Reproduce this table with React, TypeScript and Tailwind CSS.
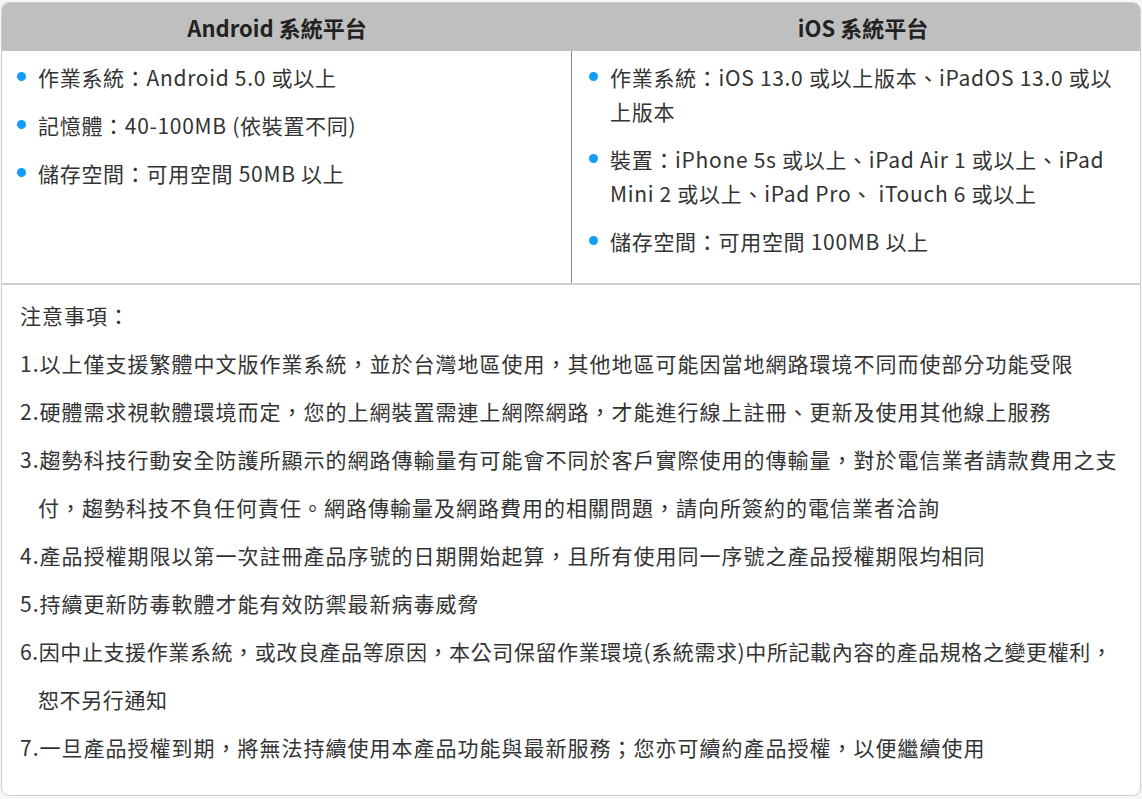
import React from 'react';

const android = ['作業系統：Android 5.0 或以上', '記憶體：40-100MB (依裝置不同)', '儲存空間：可用空間 50MB 以上'];

const ios = [
  '作業系統：iOS 13.0 或以上版本、iPadOS 13.0 或以上版本',
  '裝置：iPhone 5s 或以上、iPad Air 1 或以上、iPad Mini 2 或以上、iPad Pro、 iTouch 6 或以上',
  '儲存空間：可用空間 100MB 以上',
];

const notes = [
  '1.以上僅支援繁體中文版作業系統，並於台灣地區使用，其他地區可能因當地網路環境不同而使部分功能受限',
  '2.硬體需求視軟體環境而定，您的上網裝置需連上網際網路，才能進行線上註冊、更新及使用其他線上服務',
  '3.趨勢科技行動安全防護所顯示的網路傳輸量有可能會不同於客戶實際使用的傳輸量，對於電信業者請款費用之支付，趨勢科技不負任何責任。網路傳輸量及網路費用的相關問題，請向所簽約的電信業者洽詢',
  '4.產品授權期限以第一次註冊產品序號的日期開始起算，且所有使用同一序號之產品授權期限均相同',
  '5.持續更新防毒軟體才能有效防禦最新病毒威脅',
  '6.因中止支援作業系統，或改良產品等原因，本公司保留作業環境(系統需求)中所記載內容的產品規格之變更權利，恕不另行通知',
  '7.一旦產品授權到期，將無法持續使用本產品功能與最新服務；您亦可續約產品授權，以便繼續使用',
];

function BulletList({ items }: { items: string[] }) {
  return (
    <ul className="pt-[9px] pb-[11px] tracking-[0.7px]">
      {items.map((t) => (
        <li key={t} className="flex mb-[14px] leading-[34px]">
          <span className="w-[9px] h-[9px] rounded-full bg-[#139cf8] shrink-0 mt-[12px] mr-[12px]" />
          <span>{t}</span>
        </li>
      ))}
    </ul>
  );
}

export default function App() {
  return (
    <div
      className="min-h-[799px] bg-[#f7f7f7] pt-[2px] px-[1px] text-[#333] text-[21px] [text-spacing-trim:space-all]"
      style={{ fontFamily: '"Noto Sans CJK TC", "Noto Sans", sans-serif' }}
    >
      <div className="bg-white border border-[#cfcfcf] rounded-[8px] overflow-hidden">
        {/* Platforms */}
        <div className="grid grid-cols-[570px_1fr]">
          <div className="bg-[#bfbfbf] h-[48px] flex items-center justify-center pr-[20px] font-bold text-[22px] text-[#222]">
            Android 系統平台
          </div>
          <div className="bg-[#bfbfbf] h-[48px] flex items-center justify-center pl-[14px] font-bold text-[22px] text-[#222]">
            iOS 系統平台
          </div>
          <div className="border-r border-[#8a8a8a] pl-[15px] pr-[20px]">
            <BulletList items={android} />
          </div>
          <div className="pl-[17px] pr-[22px]">
            <BulletList items={ios} />
          </div>
        </div>

        {/* Notes */}
        <div className="border-t-2 border-[#cfcfcf] px-[18px] pt-[6px] pb-[24px] leading-[48px] tracking-[1px]">
          <p>注意事項：</p>
          {notes.map((n, i) => (
            <p key={n} className={i === 5 ? 'pl-[18px] -indent-[18px] tracking-[0.6px]' : 'pl-[18px] -indent-[18px]'}>
              {n}
            </p>
          ))}
        </div>
      </div>
    </div>
  );
}
